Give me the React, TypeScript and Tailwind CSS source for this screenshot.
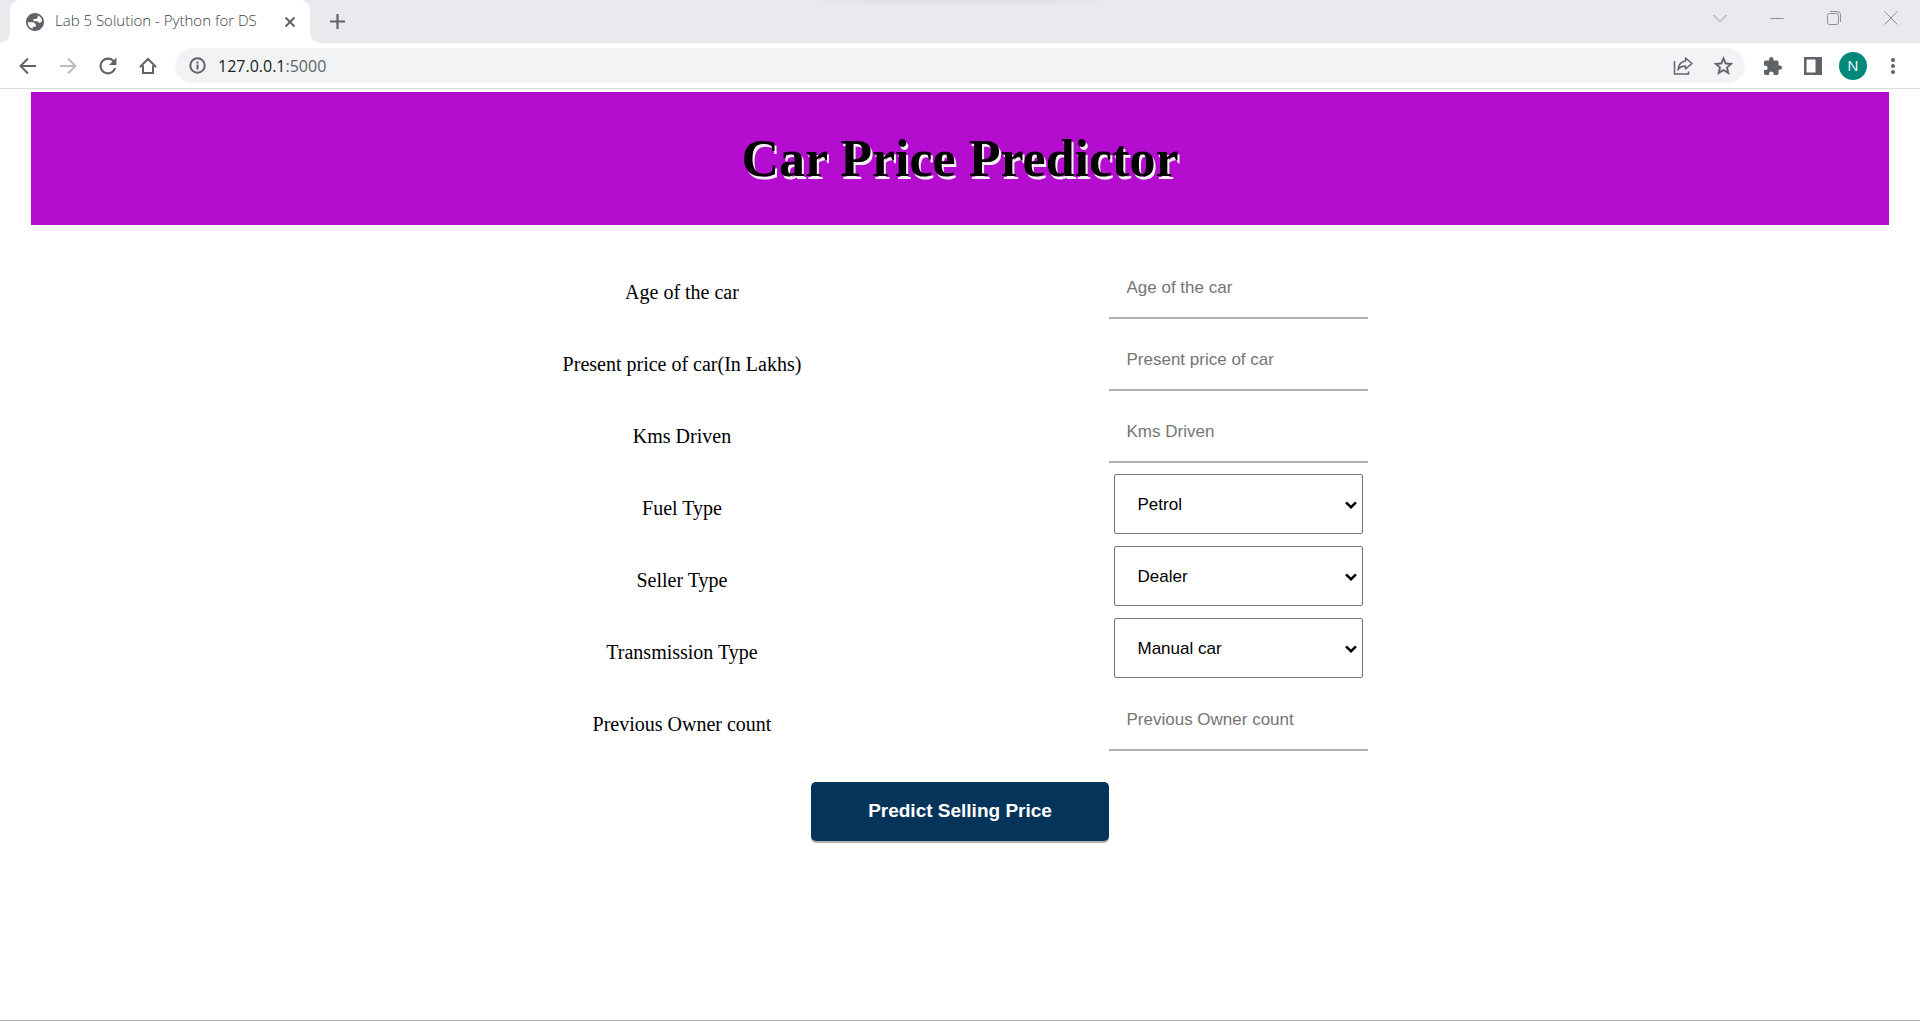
import React from "react";

const CHROME_FONT = "font-['Open_Sans','Noto_Sans',sans-serif]";

type Field =
  | { id: string; label: string; kind: "text"; placeholder: string }
  | { id: string; label: string; kind: "select"; options: string[] };

const fields: Field[] = [
  { id: "age", label: "Age of the car", kind: "text", placeholder: "Age of the car" },
  { id: "price", label: "Present price of car(In Lakhs)", kind: "text", placeholder: "Present price of car" },
  { id: "kms", label: "Kms Driven", kind: "text", placeholder: "Kms Driven" },
  { id: "fuel", label: "Fuel Type", kind: "select", options: ["Petrol", "Diesel", "CNG"] },
  { id: "seller", label: "Seller Type", kind: "select", options: ["Dealer", "Individual"] },
  { id: "transmission", label: "Transmission Type", kind: "select", options: ["Manual car", "Automatic car"] },
  { id: "owners", label: "Previous Owner count", kind: "text", placeholder: "Previous Owner count" },
];

function IconButton({ label, children }: { label: string; children: React.ReactNode }) {
  return (
    <button type="button" aria-label={label} className="flex size-10 shrink-0 items-center justify-center text-[#5f6368]">
      {children}
    </button>
  );
}

function WindowButton({ label, children }: { label: string; children: React.ReactNode }) {
  return (
    <button type="button" aria-label={label} className="flex h-9 w-[57px] items-center justify-center text-[#8d8f92]">
      <svg width="14" height="14" viewBox="0 0 14 14" fill="none" stroke="currentColor">
        {children}
      </svg>
    </button>
  );
}

function TabStrip() {
  return (
    <div className="relative flex h-[43px] bg-[#e8eaed]">
      <div className="absolute inset-x-0 top-0 mx-auto h-[6px] w-[300px] bg-linear-to-b from-[#dfe0e4] to-[#e8eaed] mask-x-from-80%" />
      <div className="w-[10px] bg-white">
        <div className="h-full rounded-br-[10px] bg-[#e8eaed]" />
      </div>
      <div className="flex w-[300px] items-center rounded-t-[10px] bg-white pl-4 pr-[14px]">
        <svg width="18" height="18" viewBox="2 2 20 20" fill="#5f6368" className="shrink-0">
          <path d="M12 2C6.480 2 2 6.480 2 12s4.480 10 10 10 10-4.480 10-10S17.520 2 12 2zM4 12.200h4.400c3.400.020 4.940 1.730 4.600 5.130H9.500v2.270A8.010 8.010 0 0 1 4 12.200zM16.300 13c-.6-1.300-1.500-1.700-2.900-1.700h-1.700c-.9 0-1.500-.6-1.500-1.400V8.700h2.300c1.600 0 2.500-1 2.500-2.500V4.600A8 8 0 0 1 19.900 11c-.7 1.300-1.800 2-3.600 2z" />
        </svg>
        <span className="ml-[11px] flex-1 whitespace-nowrap pb-0.5 text-[15px] font-light text-[#3c4043]">
          Lab 5 Solution - Python for DS
        </span>
        <button type="button" aria-label="Close tab" className="text-[#5f6368]">
          <svg width="12" height="12" viewBox="0 0 12 12" stroke="currentColor" strokeWidth="2">
            <path d="M1.500 1.500 10.500 10.500M10.500 1.500 1.500 10.500" />
          </svg>
        </button>
      </div>
      <div className="w-[10px] bg-white">
        <div className="h-full rounded-bl-[10px] bg-[#e8eaed]" />
      </div>
      <button type="button" aria-label="New tab" className="ml-[9px] text-[#5f6368]">
        <svg width="17" height="17" viewBox="0 0 17 17" stroke="currentColor" strokeWidth="2.200">
          <path d="M8.500 1V16M1 8.500H16" />
        </svg>
      </button>
      <div className="ml-auto flex pr-px">
        <WindowButton label="Search tabs"><path d="M.5 4 7 10.500 13.500 4" /></WindowButton>
        <WindowButton label="Minimize"><path d="M.5 7.500H13.500" /></WindowButton>
        <WindowButton label="Restore">
          <rect x=".5" y="2.500" width="11" height="11" rx="2" />
          <path d="M3 .5H10.500Q13.500 .5 13.500 3.500V11" />
        </WindowButton>
        <WindowButton label="Close"><path d="M.5 .5 13.500 13.500M13.500 .5 .5 13.500" /></WindowButton>
      </div>
    </div>
  );
}

function Toolbar() {
  return (
    <div className="flex h-[46px] items-center border-b border-[#dadce0] bg-white pl-2 pr-[7px]">
      <IconButton label="Back">
        <svg width="18" height="18" viewBox="0 0 18 18" fill="none" stroke="currentColor" strokeWidth="2">
          <path d="M17 9H2M9 1.500 1.500 9 9 16.500" />
        </svg>
      </IconButton>
      <IconButton label="Forward">
        <svg width="18" height="18" viewBox="0 0 18 18" fill="none" stroke="#bbbdbf" strokeWidth="2">
          <path d="M1 9H16M9 1.500 16.500 9 9 16.500" />
        </svg>
      </IconButton>
      <IconButton label="Reload">
        <svg width="18" height="18" viewBox="3.500 3.500 17 17" fill="currentColor">
          <path d="M17.650 6.350A7.960 7.960 0 0 0 12 4a8 8 0 1 0 7.730 10h-2.080A6 6 0 1 1 12 6c1.660 0 3.140.690 4.220 1.780L13 11h7V4l-2.350 2.350z" />
        </svg>
      </IconButton>
      <IconButton label="Home">
        <svg width="18" height="18" viewBox="0 0 18 18" fill="none" stroke="currentColor" strokeWidth="2">
          <path d="M1 10 9 2 17 10M4 8.500V16H14V8.500" />
        </svg>
      </IconButton>
      <div className="ml-[7px] flex h-[35px] flex-1 items-center rounded-full bg-[#f1f3f4] pl-[14px] pr-0.5">
        <svg width="17" height="17" viewBox="0 0 17 17" fill="none" stroke="#5f6368" strokeWidth="2" className="shrink-0">
          <circle cx="8.500" cy="8.500" r="7.200" />
          <path d="M8.500 7.500V12.500M8.500 4.500V6.500" />
        </svg>
        <span className="ml-3 flex-1 text-[16px] text-[#202124]">
          127.0.0.1<span className="text-[#5f6368]">:5000</span>
        </span>
        <IconButton label="Share">
          <svg width="20" height="20" viewBox="0 0 20 20" fill="none" stroke="currentColor" strokeWidth="1.500">
            <path d="M1.500 5V18H15.500V15.500" />
            <path d="M12.500 2 19 7.500 12.500 13V10C9 10 6.500 11 5 14 5.500 9 8 5.500 12.500 5Z" strokeLinejoin="round" />
          </svg>
        </IconButton>
        <IconButton label="Bookmark">
          <svg width="19" height="19" viewBox="2 2 20 19" fill="currentColor" stroke="currentColor" strokeWidth=".4">
            <path d="m22 9.240-7.190-.620L12 2 9.190 8.630 2 9.240l5.460 4.730L5.820 21 12 17.270 18.180 21l-1.630-7.030L22 9.240zM12 15.400l-3.760 2.270 1-4.280-3.320-2.880 4.380-.380L12 6.100l1.710 4.040 4.380.380-3.320 2.880 1 4.280L12 15.400z" />
          </svg>
        </IconButton>
      </div>
      <div className="ml-2 flex items-center">
        <IconButton label="Extensions">
          <svg width="18" height="18" viewBox="2 1 21 21" fill="currentColor">
            <path d="M20.500 11H19V7c0-1.100-.9-2-2-2h-4V3.500a2.500 2.500 0 0 0-5 0V5H4c-1.100 0-1.990.9-1.990 2v3.800H3.500c1.490 0 2.700 1.210 2.700 2.700s-1.210 2.700-2.700 2.700H2V20c0 1.100.9 2 2 2h3.800v-1.500c0-1.490 1.210-2.700 2.700-2.700s2.700 1.210 2.700 2.700V22H17c1.100 0 2-.9 2-2v-4h1.500a2.500 2.500 0 0 0 0-5z" />
          </svg>
        </IconButton>
        <IconButton label="Side panel">
          <svg width="18" height="18" viewBox="0 0 18 18" fill="currentColor">
            <path fillRule="evenodd" d="M0 0H18V18H0ZM2.500 2.500V15.500H11.500V2.500Z" />
          </svg>
        </IconButton>
        <IconButton label="Profile">
          <span className="flex size-7 items-center justify-center rounded-full bg-[#00897b] text-[15px] leading-none text-white">N</span>
        </IconButton>
        <IconButton label="Menu">
          <svg width="4" height="16" viewBox="0 0 4 16" fill="currentColor">
            <circle cx="2" cy="2" r="2" />
            <circle cx="2" cy="8" r="2" />
            <circle cx="2" cy="14" r="2" />
          </svg>
        </IconButton>
      </div>
    </div>
  );
}

function FieldControl({ field }: { field: Field }) {
  if (field.kind === "text") {
    return (
      <input
        id={field.id}
        type="text"
        placeholder={field.placeholder}
        className="h-[62px] w-[259px] border-b-2 border-[#b2b2b2] px-[18px] pt-0.5 text-[17px] outline-none placeholder:text-[#757575]"
      />
    );
  }
  return (
    <div className="relative">
      <select
        id={field.id}
        className="h-[60px] w-[249px] appearance-none rounded-[2px] border border-[#767676] bg-white px-[23px] pt-0.5 text-[17px] text-black"
      >
        {field.options.map((option) => (
          <option key={option}>{option}</option>
        ))}
      </select>
      <svg width="12" height="8" viewBox="0 0 12 8" fill="none" stroke="black" strokeWidth="2.500" className="pointer-events-none absolute right-[6px] top-[27px]">
        <path d="M1 1.300 6 6.200 11 1.300" />
      </svg>
    </div>
  );
}

export default function App() {
  return (
    <div className="flex min-h-screen flex-col border-b border-[#b0b0b0] bg-white">
      <header className={CHROME_FONT}>
        <TabStrip />
        <Toolbar />
      </header>
      <main className="px-[31px] pt-[3px]">
        <div className="bg-[#b50dd0] pb-[34px] pt-[34px] text-center">
          <h1 className="font-['Liberation_Serif',serif] text-[52px] font-bold leading-[65px] text-black [text-shadow:2px_3px_0_#f2f2f2]">
            Car Price Predictor
          </h1>
        </div>
        <form className="mt-8 flex flex-col items-center font-['Liberation_Sans',sans-serif]" onSubmit={(e) => e.preventDefault()}>
          <div className="w-full max-w-[1112px]">
            {fields.map((field) => (
              <div key={field.id} className="grid h-[72px] grid-cols-2 pb-0.5">
                <label htmlFor={field.id} className="self-center text-center font-['Liberation_Serif',serif] text-xl text-black">
                  {field.label}
                </label>
                <div className="flex h-[62px] items-center justify-center">
                  <FieldControl field={field} />
                </div>
              </div>
            ))}
          </div>
          <button
            type="submit"
            className="mt-[21px] h-[59px] w-[298px] rounded-[5px] bg-[#05345a] text-[19px] font-bold text-white shadow-[0_2px_0_#b0b4b8]"
          >
            Predict Selling Price
          </button>
        </form>
      </main>
    </div>
  );
}
